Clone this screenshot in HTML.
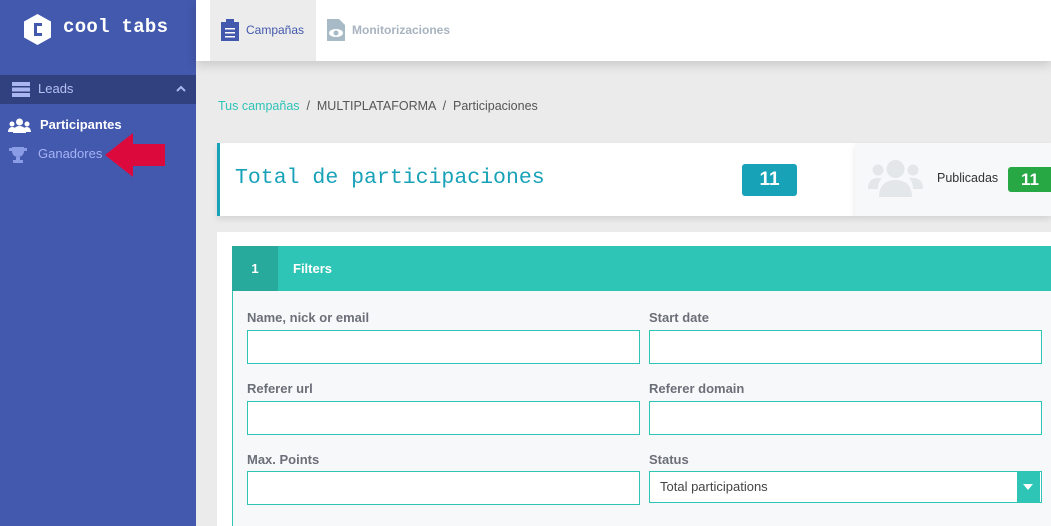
<!DOCTYPE html>
<html><head><style>
*{margin:0;padding:0;box-sizing:border-box}
body{width:1051px;height:526px;overflow:hidden;background:#ebebeb;font-family:"Liberation Sans",sans-serif;position:relative}
.abs{position:absolute}
.sb{left:0;top:0;width:196px;height:526px;background:#4359ad}
.top{left:196px;top:0;width:855px;height:61px;background:#fff;box-shadow:0 4px 10px rgba(0,0,0,.15)}
.lbl{font-size:13px;font-weight:bold;color:#6b6f78}
.inp{background:#fff;border:1px solid #2ec4b6;height:34px;width:393px}
</style></head><body>
<div class="abs sb">
 <svg class="abs" style="left:24px;top:14px" width="27" height="31" viewBox="0 0 27 31"><polygon points="13.5,0 27,7.5 27,23.5 13.5,31 0,23.5 0,7.5" fill="#fff"/><path d="M18 9H10v13h8v-3h-5v-7h5z" fill="#4359ad"/></svg>
 <div class="abs" style="left:63px;top:16px;color:#fff;font-family:'Liberation Mono',monospace;font-size:19px;font-weight:bold;letter-spacing:0.3px">cool tabs</div>
 <div class="abs" style="left:0;top:75px;width:196px;height:29px;background:#31417f"></div>
 <svg class="abs" style="left:12px;top:82px" width="18" height="15"><rect y="0" width="18" height="4" fill="#a9b6ef"/><rect y="5.5" width="18" height="4" fill="#a9b6ef"/><rect y="11" width="18" height="4" fill="#a9b6ef"/></svg>
 <div class="abs" style="left:38px;top:81px;color:#b5c1f5;font-size:13px">Leads</div>
 <svg class="abs" style="left:176px;top:85px" width="10" height="7"><path d="M1 6L5 2L9 6" stroke="#a9b6ef" stroke-width="2" fill="none"/></svg>
 <svg class="abs" style="left:8px;top:118px" width="23" height="15" viewBox="0 0 23 15"><circle cx="11.5" cy="4" r="3.5" fill="#fff"/><circle cx="4" cy="6" r="2.5" fill="#fff"/><circle cx="19" cy="6" r="2.5" fill="#fff"/><path d="M5 15c0-5 3-7 6.5-7s6.5 2 6.5 7z" fill="#fff"/><path d="M0 14c0-3 2-5 4-5s3 1 3 1l-2 4z M23 14c0-3-2-5-4-5s-3 1-3 1l2 4z" fill="#fff"/></svg>
 <div class="abs" style="left:40px;top:117px;color:#fff;font-size:13px;font-weight:bold">Participantes</div>
 <svg class="abs" style="left:9px;top:146px" width="18" height="17" viewBox="0 0 18 17"><path d="M3 1h12v4c0 4-3 6-6 6s-6-2-6-6z M0 2h3v3H0z M15 2h3v3h-3z M7 11h4v3H7z M4 14h10v3H4z" fill="#8b9ce6"/></svg>
 <div class="abs" style="left:38px;top:146px;color:#a5b3f5;font-size:13px">Ganadores</div>
 <svg class="abs" style="left:105px;top:133px" width="62" height="45"><polygon points="0,22 28,0 28,11 60,11 60,33 28,33 28,44" fill="#dc0a3c"/></svg>
</div>
<div class="abs top">
 <div class="abs" style="left:14px;top:0;width:106px;height:61px;background:#ececec"></div>
 <svg class="abs" style="left:25px;top:19px" width="18" height="22"><rect x="0" y="3" width="18" height="19" fill="#4359ad"/><rect x="5" y="0" width="8" height="5" fill="#4359ad"/><rect x="4" y="9" width="10" height="1.5" fill="#fff"/><rect x="4" y="13" width="10" height="1.5" fill="#fff"/><rect x="4" y="17" width="10" height="1.5" fill="#fff"/></svg>
 <div class="abs" style="left:50px;top:23px;font-size:12px;color:#4359ad">Campañas</div>
 <svg class="abs" style="left:130px;top:19px" width="20" height="22"><path d="M1 0h12l6 6v16H1z" fill="#a8bac6"/><ellipse cx="10" cy="14" rx="7" ry="4" fill="#fff"/><circle cx="10" cy="14" r="2.5" fill="#a8bac6"/></svg>
 <div class="abs" style="left:156px;top:23px;font-size:12px;font-weight:bold;color:#a8b4c0">Monitorizaciones</div>
</div>
<div class="abs" style="left:218px;top:99px;font-size:12.5px;color:#555"><span style="color:#2ec4b6">Tus campañas</span> &nbsp;/ &nbsp;MULTIPLATAFORMA &nbsp;/ &nbsp;Participaciones</div>
<div class="abs" style="left:217px;top:143px;width:638px;height:73px;background:#fff;border-left:3px solid #17a2b8;box-shadow:0 3px 6px rgba(0,0,0,.1)"></div>
<div class="abs" style="left:855px;top:143px;width:196px;height:73px;background:#f7f8fa;box-shadow:0 3px 6px rgba(0,0,0,.1)"></div>
<div class="abs" style="left:235px;top:166px;font-family:'Liberation Mono',monospace;font-size:21.5px;color:#17a2b8">Total de participaciones</div>
<div class="abs" style="left:742px;top:164px;width:55px;height:32px;background:#17a2b8;border-radius:3px;color:#fff;font-weight:bold;font-size:19px;text-align:center;line-height:32px">11</div>
<svg class="abs" style="left:868px;top:159px" width="55" height="38" viewBox="0 0 55 38"><circle cx="27.5" cy="10" r="9" fill="#e4e7ea"/><circle cx="10" cy="11" r="5.5" fill="#e4e7ea"/><circle cx="45" cy="11" r="5.5" fill="#e4e7ea"/><path d="M11 38c0-12 7-17 16.5-17S44 26 44 38z" fill="#e4e7ea"/><path d="M0 30c0-8 4-11 10-11h4c-3 3-4 7-4 11z M55 30c0-8-4-11-10-11h-4c3 3 4 7 4 11z" fill="#e4e7ea"/></svg>
<div class="abs" style="left:937px;top:171px;font-size:12.5px;color:#333">Publicadas</div>
<div class="abs" style="left:1008px;top:167px;width:50px;height:25px;background:#28a745;border-radius:3px;color:#fff;font-weight:bold;font-size:17px;line-height:25px;padding-left:13px">11</div>
<div class="abs" style="left:217px;top:232px;width:834px;height:294px;background:#fff"></div>
<div class="abs" style="left:232px;top:246px;width:819px;height:45px;background:#2ec4b6"></div>
<div class="abs" style="left:232px;top:246px;width:46px;height:45px;background:#27a99b;color:#fff;font-weight:bold;font-size:13px;text-align:center;line-height:45px">1</div>
<div class="abs" style="left:293px;top:261px;color:#fff;font-weight:bold;font-size:13px">Filters</div>
<div class="abs" style="left:232px;top:291px;width:819px;height:235px;background:#f7f8fa;border-left:1px solid #2ec4b6"></div>
<div class="abs lbl" style="left:247px;top:310px">Name, nick or email</div>
<div class="abs lbl" style="left:649px;top:310px">Start date</div>
<div class="abs inp" style="left:247px;top:330px"></div>
<div class="abs inp" style="left:649px;top:330px"></div>
<div class="abs lbl" style="left:247px;top:381px">Referer url</div>
<div class="abs lbl" style="left:649px;top:381px">Referer domain</div>
<div class="abs inp" style="left:247px;top:401px"></div>
<div class="abs inp" style="left:649px;top:401px"></div>
<div class="abs lbl" style="left:247px;top:452px">Max. Points</div>
<div class="abs lbl" style="left:649px;top:452px">Status</div>
<div class="abs inp" style="left:247px;top:471px"></div>
<div class="abs inp" style="left:649px;top:471px;height:32px;font-size:13px;color:#444;padding:7px 10px">Total participations</div>
<div class="abs" style="left:1017px;top:472px;width:23px;height:30px;background:#2ec4b6"></div>
<div class="abs" style="left:1023px;top:484px;width:0;height:0;border-left:5px solid transparent;border-right:5px solid transparent;border-top:6px solid #fff"></div>
</body></html>
